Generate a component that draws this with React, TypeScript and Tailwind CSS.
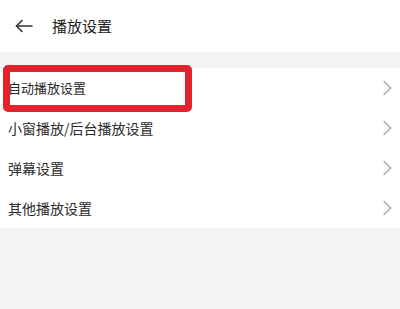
const items = [
  { label: "自动播放设置", size: "text-[13px]" },
  { label: "小窗播放/后台播放设置", size: "text-[14px]" },
  { label: "弹幕设置", size: "text-[14px]" },
  { label: "其他播放设置", size: "text-[14px]" },
];

const BackArrow = () => (
  <svg width="18" height="14" viewBox="0 0 18 14" fill="none" stroke="#333" strokeWidth="1.6" strokeLinecap="round" strokeLinejoin="round">
    <path d="M17 7H1.5" />
    <path d="M7 1.5L1.5 7L7 12.5" />
  </svg>
);

const Chevron = () => (
  <svg width="9" height="16" viewBox="0 0 9 16" fill="none" stroke="#a8a8a8" strokeWidth="1.3" strokeLinecap="round" strokeLinejoin="round">
    <path d="M1 1.5L7.8 8L1 14.5" />
  </svg>
);

const App = () => {
  return (
    <div
      className="w-[400px] h-[309px] bg-[#f3f3f5] overflow-hidden"
      style={{ fontFamily: '"Noto Sans CJK SC", "Noto Sans", sans-serif' }}
    >
      <div className="h-[52px] bg-white flex items-center">
        <div className="w-[52px] pl-[15px] flex items-center">
          <BackArrow />
        </div>
        <span className="text-[15px] text-[#222]">播放设置</span>
      </div>

      <div className="mt-[16px] bg-white">
        {items.map((item, i) => (
          <div key={item.label} className="relative h-[40px] flex items-center pl-[8px] pr-[8px]">
            {i === 0 && (
              <div className="absolute left-[3px] top-[-3px] w-[189px] h-[47px] border-[7px] border-[#e3222c] rounded-[5px]" />
            )}
            <span className={`${item.size} text-[#2a2a2a] flex-1`}>{item.label}</span>
            <Chevron />
          </div>
        ))}
      </div>
    </div>
  );
};

export default App;
